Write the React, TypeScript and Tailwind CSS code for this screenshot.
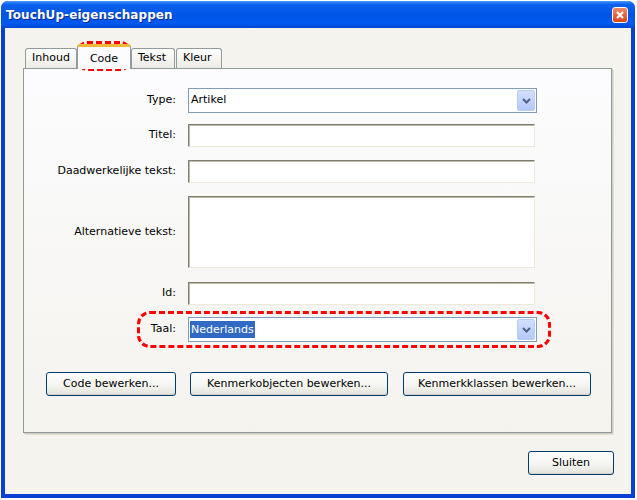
// TouchUp-eigenschappen — XP style properties dialog

const font = "font-['DejaVu_Sans',sans-serif]"

function TextField({ tall = false }: { tall?: boolean }) {
  return (
    <div
      className={`w-[347px] ${tall ? 'h-[72px]' : 'h-[23px]'} bg-white border border-[#ece9d8] border-t-[#7f7d6f] border-l-[#7f7d6f] shadow-[inset_1px_1px_0_#bdbaa8]`}
    />
  )
}

function Chevron() {
  return (
    <svg width="9" height="6" viewBox="0 0 9 6">
      <path d="M1 1 L4.5 4.5 L8 1" fill="none" stroke="#4d6185" strokeWidth="2" />
    </svg>
  )
}

function SelectBox({ children }: { children: React.ReactNode }) {
  return (
    <div className="w-[349px] h-[25px] flex items-center justify-between bg-white border border-[#7f9db9]">
      <div className="flex items-center pl-[1px]">{children}</div>
      <div className="mr-[1px] w-[18px] h-[21px] flex items-center justify-center rounded-[2px] border border-[#b7cbf8] bg-[linear-gradient(to_bottom,#d2e0fd,#b4c8f8)]">
        <Chevron />
      </div>
    </div>
  )
}

function Row({ label, children, className = '' }: { label: string; children: React.ReactNode; className?: string }) {
  return (
    <div className={`flex items-center ${className}`}>
      <div className="w-[152px] text-right">{label}</div>
      <div className="ml-[12px]">{children}</div>
    </div>
  )
}

function XpButton({ label, width }: { label: string; width: string }) {
  return (
    <div
      className={`${width} h-[24px] flex items-center justify-center rounded-[3px] border border-[#003c74] bg-[linear-gradient(to_bottom,#ffffff,#f3f3ef_60%,#e3e2da)] shadow-[inset_0_-1px_0_#d6d0c5]`}
    >
      {label}
    </div>
  )
}

function Tab({ label, active = false, width }: { label: string; active?: boolean; width: string }) {
  if (active) {
    return (
      <div
        className={`${width} relative z-10 -mb-px h-[25px] flex items-start justify-center pt-[4px] rounded-t-[3px] border border-b-0 border-[#919b9c] border-t-[3px] border-t-[#f5b73a] bg-[#fcfcfe]`}
      >
        {label}
      </div>
    )
  }
  return (
    <div
      className={`${width} h-[20px] flex items-center pl-[6px] rounded-t-[3px] border border-b-0 border-[#919b9c] bg-[linear-gradient(to_bottom,#ffffff,#ecebe5)]`}
    >
      {label}
    </div>
  )
}

export default function App() {
  return (
    <div className={`relative w-[637px] h-[500px] bg-white pt-[1px] pl-[1px] text-[11px] text-black ${font}`}>
      <div className="w-[634px] h-[497px] flex flex-col rounded-t-[7px] bg-[#0a3fd6] overflow-hidden">
        {/* Title bar */}
        <div className="h-[27px] flex items-center justify-between pl-[5px] pr-[7px] bg-[linear-gradient(to_bottom,#4b9bff_0%,#0b62ee_12%,#0055e6_50%,#0059ef_85%,#0046d0_100%)]">
          <span className="text-white font-bold text-[12px] tracking-[0.1px] [text-shadow:1px_1px_0_#0a2a8a]">
            TouchUp-eigenschappen
          </span>
          <div className="w-[16px] h-[16px] flex items-center justify-center rounded-[3px] border border-white bg-[linear-gradient(to_bottom,#ee8a64,#d9461e)]">
            <svg width="8" height="8" viewBox="0 0 8 8">
              <path d="M1 1 L7 7 M7 1 L1 7" stroke="white" strokeWidth="2" />
            </svg>
          </div>
        </div>

        {/* Client area */}
        <div className="flex-1 mx-[4px] mb-[4px] bg-[#f4f3ee] flex flex-col pt-[16px] pl-[18px] pr-[19px]">
          {/* Tabs */}
          <div className="flex items-end h-[24px] pl-[2px]">
            <Tab label="Inhoud" width="w-[52px]" />
            <Tab label="Code" active width="w-[54px]" />
            <Tab label="Tekst" width="w-[44px]" />
            <div className="w-[1px]" />
            <Tab label="Kleur" width="w-[46px]" />
          </div>

          {/* Tab page */}
          <div className="h-[365px] border border-[#919b9c] shadow-[1px_1px_0_#d0cdc0,2px_2px_0_#e2dfd3] bg-[linear-gradient(to_bottom,#fcfcfe,#f4f3ee)] pt-[19px]">
            <Row label="Type:">
              <SelectBox>
                <span className="pl-[1px]">Artikel</span>
              </SelectBox>
            </Row>
            <Row label="Titel:" className="mt-[11px]">
              <TextField />
            </Row>
            <Row label="Daadwerkelijke tekst:" className="mt-[13px]">
              <TextField />
            </Row>
            <Row label="Alternatieve tekst:" className="mt-[13px]">
              <TextField tall />
            </Row>
            <Row label="Id:" className="mt-[14px]">
              <TextField />
            </Row>
            <Row label="Taal:" className="mt-[12px]">
              <SelectBox>
                <span className="px-[1px] bg-[#316ac5] text-white leading-[17px]">Nederlands</span>
              </SelectBox>
            </Row>

            <div className="flex mt-[30px] pl-[22px] gap-[14px]">
              <XpButton label="Code bewerken..." width="w-[130px]" />
              <XpButton label="Kenmerkobjecten bewerken..." width="w-[198px]" />
              <div className="w-[1px] -ml-[14px]" />
              <XpButton label="Kenmerkklassen bewerken..." width="w-[188px]" />
            </div>
          </div>

          <div className="flex justify-end mt-[18px] -mr-[2px]">
            <XpButton label="Sluiten" width="w-[86px]" />
          </div>
        </div>
      </div>

      {/* Red dashed highlight marks */}
      <div className="absolute left-[77px] top-[41px] w-[54px] h-[30px] rounded-[10px] border-[3px] border-dashed border-[#ff0000]" />
      <div className="absolute left-[137px] top-[311px] w-[414px] h-[37px] rounded-[13px] border-[3px] border-dashed border-[#ff0000]" />
    </div>
  )
}
